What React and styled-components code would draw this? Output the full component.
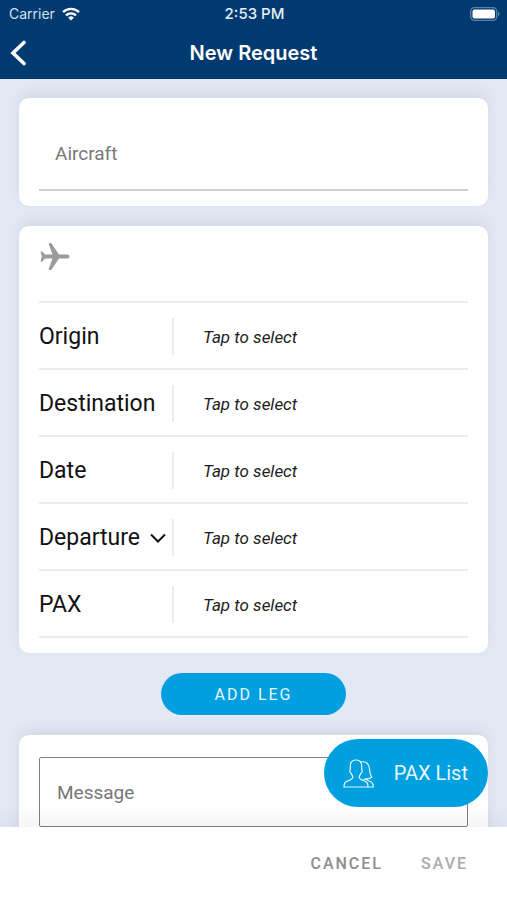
import React from "react";
import styled, { createGlobalStyle } from "styled-components";

const GlobalStyle = createGlobalStyle`
  * {
    box-sizing: border-box;
  }
  body {
    margin: 0;
    background: #e2e8f4;
    font-family: Roboto, "Liberation Sans", sans-serif;
  }
  button,
  input,
  select,
  textarea {
    font-family: inherit;
    border-radius: 0;
    margin: 0;
  }
`;

const Screen = styled.div`
  display: flex;
  flex-flow: column;
  height: 100vh;
  overflow: hidden;
`;

const TopBar = styled.header`
  flex: none;
  background: #003a70;
  color: #ffffff;
  font-family: Inter, "Liberation Sans", sans-serif;
`;

const StatusBar = styled.div`
  display: grid;
  grid-template-columns: 1fr auto 1fr;
  align-items: center;
  height: 27px;
  padding: 0 7px 0 9px;
  font-size: 14px;
`;

const Carrier = styled.span`
  display: flex;
  align-items: center;
  gap: 7px;
  color: #d5e0ec;
`;

const Time = styled.span`
  color: #e6eef6;
  font-size: 15px;
  font-weight: 500;
`;

const Battery = styled.svg`
  justify-self: end;
`;

const NavBar = styled.div`
  display: grid;
  grid-template-columns: 1fr auto 1fr;
  align-items: center;
  height: 52px;
  padding: 0 10px;
`;

const BackButton = styled.button`
  display: flex;
  justify-self: start;
  padding: 0;
  border: 0;
  background: none;
  color: inherit;
`;

const Title = styled.h1`
  margin: 0;
  font-size: 20px;
  font-weight: 600;
`;

const Content = styled.main`
  flex: 1;
  display: flex;
  flex-flow: column;
  align-items: center;
  gap: 20px;
  min-height: 0;
  padding: 19px 19px 0;
  overflow: hidden;
`;

const Card = styled.section`
  flex: none;
  width: 100%;
  padding: ${({ $padding }) => $padding};
  border-radius: 10px;
  background: #ffffff;
  box-shadow: 0 -6px 14px -2px rgba(90, 95, 110, 0.13);
`;

const AircraftInput = styled.input`
  display: block;
  width: 100%;
  height: 73px;
  padding: 0 16px;
  border: 0;
  border-bottom: 2px solid #d0d0d0;
  background: none;
  font-size: 19px;
  &::placeholder {
    color: #777777;
    opacity: 1;
  }
`;

const LegHeader = styled.div`
  height: 77px;
  padding-top: 17px;
  border-bottom: 2px solid #ececee;
  color: #9b9b9b;
`;

const Row = styled.div`
  display: flex;
  align-items: center;
  height: 67px;
  padding-top: 2px;
  border-bottom: 2px solid #ececee;
`;

const LabelCell = styled.div`
  display: flex;
  align-items: center;
  width: 135px;
  height: 37px;
  padding-right: 6px;
  border-right: 2px solid #ececee;
  color: #111111;
`;

const RowLabel = styled.label`
  font-size: 23px;
`;

const LabelSelect = styled.select`
  flex: 1;
  min-width: 0;
  padding: 0;
  border: 0;
  appearance: none;
  background: none;
  color: inherit;
  font-size: 23px;
`;

const TapButton = styled.button`
  flex: 1;
  align-self: stretch;
  padding: 0 0 0 29px;
  border: 0;
  background: none;
  color: #1c1c1c;
  font-size: 17px;
  font-style: italic;
  text-align: left;
`;

const AddButton = styled.button`
  flex: none;
  height: 42px;
  padding: 0 53px;
  border: 0;
  border-radius: 21px;
  background: #009fe0;
  color: #e6f7ff;
  font-size: 16px;
  letter-spacing: 2px;
`;

const MessageBox = styled.textarea`
  display: block;
  width: 100%;
  height: 70px;
  padding: 23px 17px;
  border: 1px solid #808080;
  border-radius: 2px;
  background: none;
  font-size: 19px;
  line-height: 24px;
  resize: none;
  overflow: hidden;
  &::placeholder {
    color: #777777;
    opacity: 1;
  }
`;

const BottomBar = styled.footer`
  position: relative;
  flex: none;
  display: flex;
  align-items: center;
  justify-content: flex-end;
  gap: 38px;
  height: 73px;
  padding: 0 39px;
  background: #ffffff;
  box-shadow: 0 -6px 24px rgba(0, 0, 0, 0.06);
`;

const ActionButton = styled.button`
  padding: 0;
  border: 0;
  background: none;
  color: ${({ $muted }) => ($muted ? "#acacac" : "#8e8e8e")};
  font-size: 16px;
  font-weight: 500;
  letter-spacing: 2px;
`;

// floats above the bottom bar
const PaxListButton = styled.button`
  position: absolute;
  right: 19px;
  bottom: 93px;
  display: flex;
  align-items: center;
  gap: 20px;
  height: 68px;
  padding: 0 20px 0 19px;
  border: 0;
  border-radius: 34px;
  background: #009fe0;
  color: #e6f7ff;
  font-size: 20px;
`;

const LegRow = ({ id, label, options }) => (
  <Row>
    <LabelCell>
      {options ? (
        <>
          <LabelSelect aria-label="Time type" defaultValue={label}>
            {options.map((option) => (
              <option key={option}>{option}</option>
            ))}
          </LabelSelect>
          <svg width="16" height="10" viewBox="0 0 16 10" fill="none">
            <path d="M1 1.5l7 7 7-7" stroke="currentColor" strokeWidth="2" />
          </svg>
        </>
      ) : (
        <RowLabel htmlFor={id}>{label}</RowLabel>
      )}
    </LabelCell>
    <TapButton id={id} type="button">
      Tap to select
    </TapButton>
  </Row>
);

const rows = [
  { id: "origin", label: "Origin" },
  { id: "destination", label: "Destination" },
  { id: "date", label: "Date" },
  { id: "time", label: "Departure", options: ["Departure", "Arrival"] },
  { id: "pax", label: "PAX" },
];

const App = () => {
  return (
    <>
      <GlobalStyle />
      <Screen>
        {/* top */}
        <TopBar>
          <StatusBar>
            <Carrier>
              Carrier
              <svg width="18" height="14" viewBox="0 0 18 14" fill="none">
                <g stroke="#ffffff" strokeWidth="2.4">
                  <path d="M1 5.2a11.4 11.4 0 0 1 16 0" />
                  <path d="M4 8.4a7.1 7.1 0 0 1 10 0" />
                </g>
                <path
                  d="M9 13.6L6.2 10.7a4 4 0 0 1 5.6 0z"
                  fill="#ffffff"
                />
              </svg>
            </Carrier>
            <Time>2:53 PM</Time>
            <Battery width="30" height="14" viewBox="0 0 30 14" fill="none">
              <rect
                x="0.7"
                y="0.7"
                width="26"
                height="12.6"
                rx="3.8"
                stroke="#5b82a9"
                strokeWidth="1.3"
              />
              <rect x="2.5" y="2.5" width="22.5" height="9" rx="2" fill="#fff" />
              <path d="M28 4.6c2 .8 2 4 0 4.8z" fill="#5b82a9" />
            </Battery>
          </StatusBar>
          <NavBar>
            <BackButton type="button" aria-label="Back">
              <svg width="18" height="26" viewBox="0 0 18 26" fill="none">
                <path
                  d="M14 2.5L3 13l11 10.5"
                  stroke="currentColor"
                  strokeWidth="3.6"
                  strokeLinecap="round"
                />
              </svg>
            </BackButton>
            <Title>New Request</Title>
          </NavBar>
        </TopBar>
        {/* form */}
        <Content>
          <Card $padding="20px 20px 15px">
            <AircraftInput aria-label="Aircraft" placeholder="Aircraft" />
          </Card>
          <Card $padding="0 20px 15px">
            <LegHeader>
              <svg width="31" height="27" viewBox="-1 0 31 27">
                <path
                  d="M.5 8.500h1.800l2.700 3h7.500L8.800 1.200C8.500.5 8.900 0 9.600 0h1.600L19 11.500h8.500a2 2 0 0 1 0 4H19L11.200 27H9.600c-.7 0-1.100-.5-.8-1.200l3.700-10.300H5l-2.700 3H.5l1.300-5z"
                  fill="currentColor"
                />
              </svg>
            </LegHeader>
            {rows.map((row) => (
              <LegRow key={row.id} {...row} />
            ))}
          </Card>
          <AddButton type="button">ADD LEG</AddButton>
          <Card $padding="22px 20px 20px">
            <MessageBox aria-label="Message" placeholder="Message" />
          </Card>
        </Content>
        {/* actions */}
        <BottomBar>
          <PaxListButton type="button">
            <svg
              width="31"
              height="29"
              viewBox="0 0 31 29"
              fill="none"
              stroke="currentColor"
              strokeWidth="1.2"
              strokeLinejoin="round"
            >
              <path d="M1 28c0-4 1-5 4-6.200 3-1.200 4.800-1.800 4.800-3.600 0-1.400-.9-2-1.500-3.700-.8-.4-1.500-1.400-1.500-2.700 0-.8.300-1.300.6-1.600C6.800 4.600 8 1 13 1s6.200 3.600 5.600 9.200c.4.300.6.800.6 1.600 0 1.300-.7 2.300-1.500 2.700-.6 1.700-1.500 2.300-1.500 3.700 0 1.800 1.800 2.400 4.800 3.600s4 2.200 4 6.200z" />
              <path d="M17 3.200c6-1.600 9 1.300 9.500 6.800.3 3.800.6 6 2.300 8.200-1.600 1.300-3.500 1.600-5.600 1.600.2 1.300 1.400 1.600 3.600 2.500 2.500 1 3.500 2 3.500 5.700h-5M23.200 19.800c-1.200 0-1.800.2-2.600.9" />
            </svg>
            PAX List
          </PaxListButton>
          <ActionButton type="button">CANCEL</ActionButton>
          <ActionButton type="button" $muted>
            SAVE
          </ActionButton>
        </BottomBar>
      </Screen>
    </>
  );
};

export default App;
